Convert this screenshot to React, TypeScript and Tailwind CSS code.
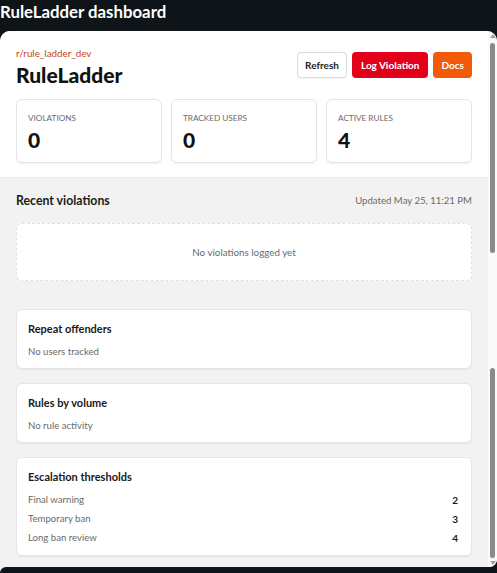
import React from 'react';

const font = { fontFamily: 'Lato, "Noto Sans", sans-serif' };

const stats = [
  { label: 'Violations', value: 0 },
  { label: 'Tracked users', value: 0 },
  { label: 'Active rules', value: 4 },
];

const thresholds = [
  { label: 'Final warning', value: 2 },
  { label: 'Temporary ban', value: 3 },
  { label: 'Long ban review', value: 4 },
];

function Card({ title, children }: { title: string; children: React.ReactNode }) {
  return (
    <div className="rounded-[6px] border border-[#e6e6e6] bg-white px-[11px] pt-[11px] pb-[8px] shadow-[0_1px_2px_rgba(0,0,0,0.06)]">
      <h3 className="text-[11px] leading-[16px] font-bold text-[#1a1a1a]">{title}</h3>
      <div className="mt-[7px]">{children}</div>
    </div>
  );
}

function Scrollbar() {
  return (
    <div className="flex w-[9px] flex-col items-center bg-[#fafafa] pt-[3px] pb-[2px]">
      <div className="h-0 w-0 border-x-[3px] border-b-[4px] border-x-transparent border-b-[#a0a0a0]" />
      <div className="mt-[5px] h-[210px] w-[5px] rounded-full bg-[#8a8a8a]" />
      <div className="flex-1" />
      <div className="h-[190px] w-[5px] rounded-full bg-[#8a8a8a]" />
      <div className="mt-[3px] h-0 w-0 border-x-[3px] border-t-[4px] border-x-transparent border-t-[#a0a0a0]" />
    </div>
  );
}

export default function App() {
  return (
    <div className="flex h-[573px] w-[497px] flex-col overflow-hidden bg-[#0e1417]" style={font}>
      {/* Window title */}
      <div className="h-[31px] text-[16.8px] leading-[24px] font-bold text-white">RuleLadder dashboard</div>

      {/* Main panel */}
      <div className="flex min-h-0 flex-1 overflow-hidden rounded-t-[10px] rounded-br-[8px] bg-white">
        <div className="flex min-w-0 flex-1 flex-col">
          {/* Header */}
          <div className="border-b border-[#e8e8e8] bg-white px-4 pt-[14px] pb-[14px]">
            <div className="flex items-start justify-between">
              <div>
                <div className="text-[9.8px] leading-[16px] text-[#c2471a]">r/rule_ladder_dev</div>
                <h1 className="text-[21px] leading-[28px] font-black text-[#111]">RuleLadder</h1>
              </div>
              <div className="mt-[7px] flex gap-[5px]">
                <button className="h-[26px] rounded-[4px] border border-[#dcdcdc] bg-white px-[7px] text-[10px] font-bold text-[#222] shadow-[0_1px_1px_rgba(0,0,0,0.05)]">
                  Refresh
                </button>
                <button className="h-[26px] rounded-[4px] bg-[#e3001b] px-[9px] text-[10px] font-bold text-white">
                  Log Violation
                </button>
                <button className="h-[26px] rounded-[4px] bg-[#f25a08] px-[8px] text-[10px] font-bold text-white">
                  Docs
                </button>
              </div>
            </div>
            <div className="mt-[10px] grid grid-cols-3 gap-[9px]">
              {stats.map((s) => (
                <div
                  key={s.label}
                  className="h-[64px] rounded-[6px] border border-[#e6e6e6] bg-white px-[11px] pt-[11px] shadow-[0_1px_2px_rgba(0,0,0,0.06)]"
                >
                  <div className="text-[8.2px] leading-[14px] text-[#6a6a6a] uppercase">{s.label}</div>
                  <div className="mt-[2px] text-[21px] leading-[26px] font-black text-[#111]">{s.value}</div>
                </div>
              ))}
            </div>
          </div>

          {/* Body */}
          <div className="flex flex-1 flex-col bg-[#f2f2f2] px-4 pt-[13px]">
            <div className="flex items-center justify-between">
              <h2 className="text-[12.3px] leading-[20px] font-bold text-[#1a1a1a]">Recent violations</h2>
              <span className="text-[9.6px] text-[#6a6a6a]">Updated May 25, 11:21 PM</span>
            </div>
            <div className="mt-[12px] flex h-[58px] items-center justify-center rounded-[6px] border border-dashed border-[#e0e0e0] bg-white text-[9.8px] text-[#6a6a6a]">
              No violations logged yet
            </div>

            <div className="mt-[28px] flex flex-col gap-[14px]">
              <Card title="Repeat offenders">
                <p className="text-[9.6px] leading-[16px] text-[#6a6a6a]">No users tracked</p>
              </Card>
              <Card title="Rules by volume">
                <p className="text-[9.6px] leading-[16px] text-[#6a6a6a]">No rule activity</p>
              </Card>
              <Card title="Escalation thresholds">
                <ul className="flex flex-col gap-[3px] pr-[2px] pb-px">
                  {thresholds.map((t) => (
                    <li key={t.label} className="flex justify-between text-[9.6px] leading-[16px]">
                      <span className="text-[#6a6a6a]">{t.label}</span>
                      <span className="text-[10px] font-bold text-[#1a1a1a]">{t.value}</span>
                    </li>
                  ))}
                </ul>
              </Card>
            </div>
          </div>
        </div>
        <Scrollbar />
      </div>

      {/* Bottom edge */}
      <div className="h-[6px] bg-[#f2f2f2]">
        <div className="h-full rounded-tl-[8px] bg-[#0e1417]" />
      </div>
    </div>
  );
}
